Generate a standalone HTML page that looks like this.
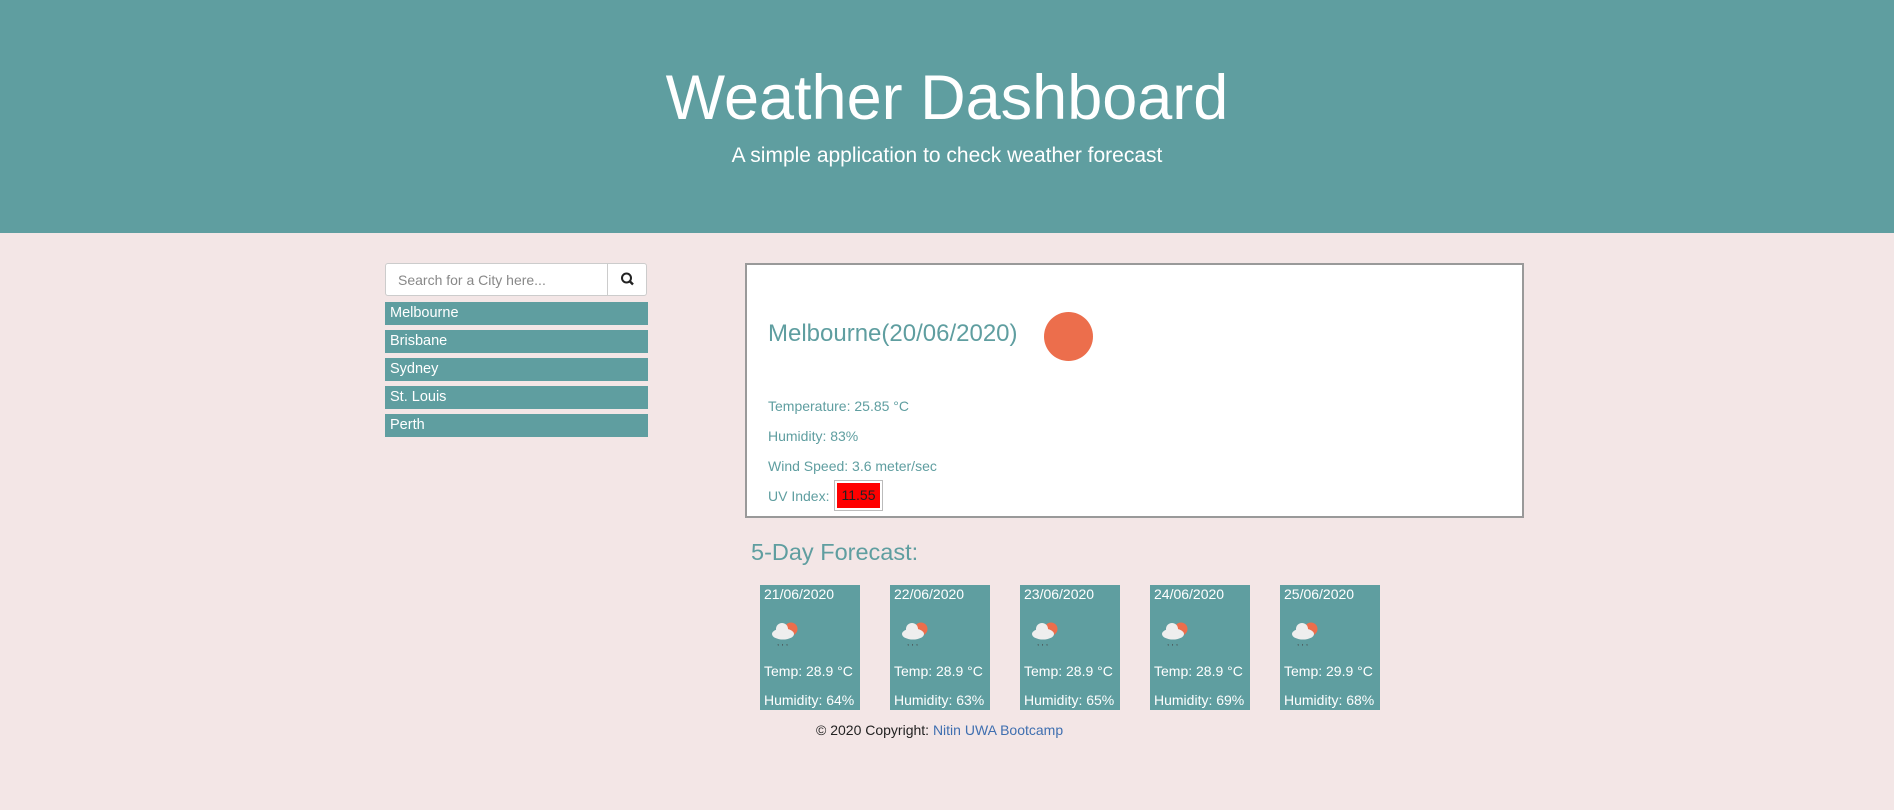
<!DOCTYPE html>
<html><head><meta charset="utf-8"><style>
*{box-sizing:border-box;margin:0;padding:0}
body{width:1894px;height:810px;background:#f3e6e6;font-family:"Liberation Sans",Arial,sans-serif;position:relative;overflow:hidden}
.hdr{position:absolute;left:0;top:0;width:1894px;height:233px;background:#5f9ea0;color:#fff;text-align:center}
.hdr h1{position:absolute;left:0;right:0;top:62px;font-size:63px;font-weight:400;line-height:72px}
.hdr p{position:absolute;left:0;right:0;top:144px;font-size:21px;line-height:24px}
.search{position:absolute;left:385px;top:263px;width:262px;height:33px;background:#fff;border:1px solid #ccc;border-radius:3px}
.search span{position:absolute;left:12px;top:8px;font-size:14px;color:#888}
.search .b{position:absolute;left:221px;top:0;width:40px;height:31px;border-left:1px solid #ccc}
.city{position:absolute;left:385px;width:263px;height:23px;background:#5f9ea0;color:#fff;font-size:14.5px;padding-left:5px;line-height:22px}
.card{position:absolute;left:745px;top:263px;width:779px;height:255px;background:#fff;border:2px solid #999}
.t{position:absolute;color:#5f9ea0}
.fc{position:absolute;top:585px;width:100px;height:125px;background:#5f9ea0;color:#fff;font-size:14px}
.fc div{position:absolute;left:4px;white-space:nowrap}
</style></head><body>
<div class="hdr"><h1>Weather Dashboard</h1><p>A simple application to check weather forecast</p></div>
<div class="search"><span>Search for a City here...</span><div class="b"><svg width="40" height="31" viewBox="0 0 40 31"><circle cx="18.5" cy="14" r="4.5" fill="none" stroke="#222" stroke-width="2"/><line x1="22" y1="17.5" x2="25" y2="20.5" stroke="#222" stroke-width="2.4"/></svg></div></div>
<div class="city" style="top:302px">Melbourne</div>
<div class="city" style="top:330px">Brisbane</div>
<div class="city" style="top:358px">Sydney</div>
<div class="city" style="top:386px">St. Louis</div>
<div class="city" style="top:414px">Perth</div>
<div class="card">
<div class="t" style="left:21px;top:55px;font-size:24px">Melbourne(20/06/2020)</div>
<div style="position:absolute;left:297px;top:47px;width:49px;height:49px;border-radius:50%;background:#ec6e4c"></div>
<div class="t" style="left:21px;top:133px;font-size:14px">Temperature: 25.85 °C</div>
<div class="t" style="left:21px;top:163px;font-size:14px">Humidity: 83%</div>
<div class="t" style="left:21px;top:193px;font-size:14px">Wind Speed: 3.6 meter/sec</div>
<div class="t" style="left:21px;top:223px;font-size:14px">UV Index:</div>
<div style="position:absolute;left:87px;top:215px;width:49px;height:31px;border:1px solid #bbb;padding:2px"><div style="background:#f00;width:100%;height:100%;font-size:14px;color:#222;text-align:center;line-height:25px">11.55</div></div>
</div>
<div class="t" style="left:751px;top:539px;font-size:23.5px">5-Day Forecast:</div>
<div class="fc" style="left:760px"><div style="top:1px">21/06/2020</div><svg style="position:absolute;left:10px;top:34px" width="30" height="28"><circle cx="21" cy="10" r="6.5" fill="#ec6e4c"/><ellipse cx="13" cy="15" rx="11" ry="5.5" fill="#eee"/><circle cx="12" cy="10" r="6" fill="#eee"/><text x="7" y="26" font-size="8" fill="#444">, , ,</text></svg><div style="top:78px">Temp: 28.9 °C</div><div style="top:107px">Humidity: 64%</div></div>
<div class="fc" style="left:890px"><div style="top:1px">22/06/2020</div><svg style="position:absolute;left:10px;top:34px" width="30" height="28"><circle cx="21" cy="10" r="6.5" fill="#ec6e4c"/><ellipse cx="13" cy="15" rx="11" ry="5.5" fill="#eee"/><circle cx="12" cy="10" r="6" fill="#eee"/><text x="7" y="26" font-size="8" fill="#444">, , ,</text></svg><div style="top:78px">Temp: 28.9 °C</div><div style="top:107px">Humidity: 63%</div></div>
<div class="fc" style="left:1020px"><div style="top:1px">23/06/2020</div><svg style="position:absolute;left:10px;top:34px" width="30" height="28"><circle cx="21" cy="10" r="6.5" fill="#ec6e4c"/><ellipse cx="13" cy="15" rx="11" ry="5.5" fill="#eee"/><circle cx="12" cy="10" r="6" fill="#eee"/><text x="7" y="26" font-size="8" fill="#444">, , ,</text></svg><div style="top:78px">Temp: 28.9 °C</div><div style="top:107px">Humidity: 65%</div></div>
<div class="fc" style="left:1150px"><div style="top:1px">24/06/2020</div><svg style="position:absolute;left:10px;top:34px" width="30" height="28"><circle cx="21" cy="10" r="6.5" fill="#ec6e4c"/><ellipse cx="13" cy="15" rx="11" ry="5.5" fill="#eee"/><circle cx="12" cy="10" r="6" fill="#eee"/><text x="7" y="26" font-size="8" fill="#444">, , ,</text></svg><div style="top:78px">Temp: 28.9 °C</div><div style="top:107px">Humidity: 69%</div></div>
<div class="fc" style="left:1280px"><div style="top:1px">25/06/2020</div><svg style="position:absolute;left:10px;top:34px" width="30" height="28"><circle cx="21" cy="10" r="6.5" fill="#ec6e4c"/><ellipse cx="13" cy="15" rx="11" ry="5.5" fill="#eee"/><circle cx="12" cy="10" r="6" fill="#eee"/><text x="7" y="26" font-size="8" fill="#444">, , ,</text></svg><div style="top:78px">Temp: 29.9 °C</div><div style="top:107px">Humidity: 68%</div></div>
<div style="position:absolute;left:816px;top:722px;font-size:14px;color:#222">© 2020 Copyright: <span style="color:#3f6fb0">Nitin UWA Bootcamp</span></div>
</body></html>
